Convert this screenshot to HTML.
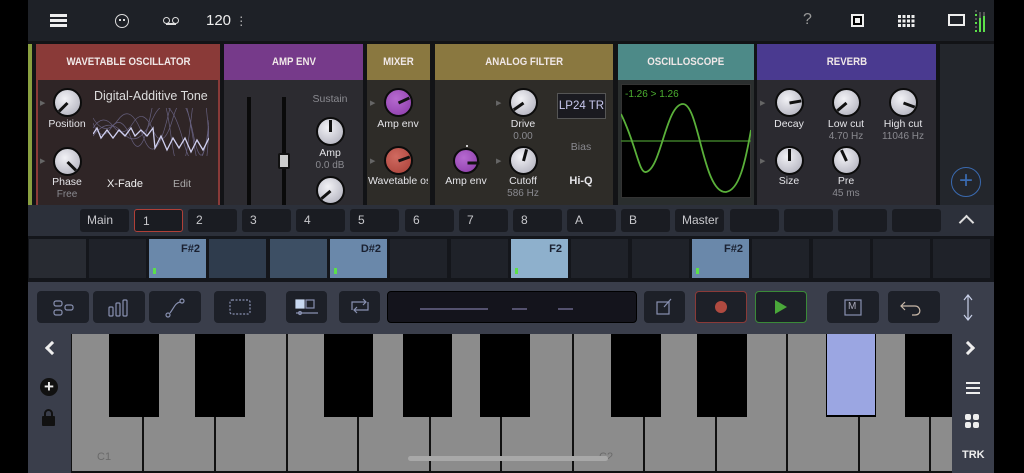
<!DOCTYPE html>
<html><head><meta charset="utf-8"><style>
*{margin:0;padding:0;box-sizing:border-box}
body{width:1024px;height:473px;background:#000;position:relative;overflow:hidden;font-family:"Liberation Sans",sans-serif;color:#ddd}
.a{position:absolute}
.k{position:absolute;width:29px;height:29px;border-radius:50%;border:2px solid #0c0c0c;background:radial-gradient(circle at 40% 35%,#f2f2f6,#a9a9b6)}
.k::after{content:"";position:absolute;left:11px;top:1px;width:3px;height:12px;background:#111;transform-origin:50% 100%;transform:rotate(var(--a))}
.kp{background:radial-gradient(circle at 40% 35%,#b66ad0,#8a3aa8)}
.kr{background:radial-gradient(circle at 40% 35%,#d06a60,#a84038)}
.lb{position:absolute;font-size:10.5px;color:#e4e4e8;text-align:center;width:80px;margin-left:-40px}
.sv{position:absolute;font-size:10px;color:#8a8a90;text-align:center;width:80px;margin-left:-40px}
.hd{position:absolute;top:44px;height:36px;font-size:11px;color:#f0e8e8;text-align:center;line-height:36px;font-weight:bold}
.hd span{display:inline-block;transform:scaleX(0.88)}
.tab{position:absolute;top:209px;width:49px;height:23px;background:#1a1c22;border-radius:3px;font-size:12px;color:#c8c8cc;padding-left:8px;line-height:23px}
.pc{position:absolute;top:239px;width:57px;height:39px;background:#1f2229;font-size:11px;color:#1a2030;text-align:right;padding-right:6px;line-height:20px;font-weight:bold}
.pc i{position:absolute;left:4px;bottom:4px;width:3px;height:6px;background:#5ce04a}
.tb{position:absolute;top:291px;height:32px;background:#1d2028;border-radius:4px}
.wk{position:absolute;top:334px;height:137px;background:#8c8c8c}
.bk{position:absolute;top:334px;height:83px;background:#000}
</style></head><body>
<!-- top bar -->
<div class="a" style="left:28px;top:0;width:966px;height:41px;background:#1e2127"></div>
<div class="a" style="left:50px;top:14px;width:17px;height:3px;background:#eee;box-shadow:0 5px 0 #eee,0 10px 0 #eee"></div>
<div class="a" style="left:115px;top:14px;width:14px;height:14px;border:1.5px solid #ddd;border-radius:50%"></div>
<div class="a" style="left:119px;top:19px;width:2px;height:2px;background:#ddd;box-shadow:4px 0 0 #ddd"></div>
<div class="a" style="left:163px;top:17px;width:7px;height:7px;border:1.5px solid #ddd;border-radius:50%"></div>
<div class="a" style="left:172px;top:17px;width:7px;height:7px;border:1.5px solid #ddd;border-radius:50%"></div>
<div class="a" style="left:166px;top:23px;width:10px;height:1.5px;background:#ddd"></div>
<div class="a" style="left:206px;top:12px;font-size:15px;color:#eee">120 <span style="font-size:12px;color:#bbb">⋮</span></div>
<div class="a" style="left:803px;top:11px;font-size:16px;color:#999">?</div>
<div class="a" style="left:851px;top:14px;width:13px;height:13px;border:2px solid #eee;background:#000"><div class="a" style="left:2px;top:2px;width:5px;height:5px;background:#eee"></div></div>
<div class="a" style="left:898px;top:14px;width:17px;height:13px;background:repeating-linear-gradient(90deg,#eee 0 3px,transparent 3px 4.5px);-webkit-mask:repeating-linear-gradient(0deg,#000 0 3px,transparent 3px 4.5px)"></div>
<div class="a" style="left:948px;top:14px;width:17px;height:12px;border:2px solid #eee"></div>
<div class="a" style="left:975px;top:10px;width:2px;height:22px;background:repeating-linear-gradient(0deg,#5ce04a 0 2px,transparent 2px 4px,#555 4px 6px,transparent 6px 8px)"></div>
<div class="a" style="left:979px;top:12px;width:2px;height:20px;background:linear-gradient(#555 0 30%,#5ce04a 30%)"></div>
<div class="a" style="left:983px;top:12px;width:2px;height:20px;background:linear-gradient(#555 0 20%,#5ce04a 20%)"></div>

<!-- module area bg -->
<div class="a" style="left:28px;top:41px;width:966px;height:165px;background:#121316"></div>
<div class="a" style="left:28px;top:44px;width:4px;height:162px;background:#8aa040"></div>
<!-- wavetable -->
<div class="a" style="left:36px;top:44px;width:184px;height:162px;background:#2f2526;border:2px solid #8a3a38;border-bottom:none"></div>
<div class="hd" style="left:36px;width:184px;background:#8a3a38"><span>WAVETABLE OSCILLATOR</span></div>
<div class="a" style="left:40px;top:99px;font-size:7px;color:#666">▶</div>
<div class="a" style="left:40px;top:157px;font-size:7px;color:#666">▶</div>
<div class="k" style="left:53px;top:88px;--a:-135deg"></div>
<div class="k" style="left:53px;top:147px;--a:135deg"></div>
<div class="lb" style="left:67px;top:118px">Position</div>
<div class="lb" style="left:67px;top:176px">Phase</div>
<div class="sv" style="left:67px;top:189px">Free</div>
<div class="a" style="left:94px;top:89px;font-size:12.5px;color:#ddd;white-space:nowrap;width:114px;overflow:hidden">Digital-Additive Tones</div>
<svg class="a" style="left:93px;top:108px" width="116" height="48" viewBox="0 0 116 48">
<g fill="none" stroke="#8a86b8" stroke-width="0.7" opacity="0.6">
<path d="M0 20 Q10 5 20 18 T40 15 T60 22 T80 10 T100 25 T116 12"/>
<path d="M0 10 Q12 30 25 12 T50 28 T75 8 T100 30 T116 18"/>
<path d="M0 28 Q15 8 30 25 T60 10 T90 32 T116 20"/>
<path d="M0 15 Q8 35 18 20 T38 30 T58 5 T78 28 T98 12 T116 30"/>
</g>
<path d="M0 26 L4 20 L8 30 L14 22 L20 30 L26 22 L32 28 L38 20 L42 28 L48 22 L54 28 L60 20 L62 40 L68 28 L74 42 L80 30 L86 40 L92 30 L98 44 L104 32 L110 42 L116 30" fill="none" stroke="#d0d0f0" stroke-width="1.3"/>
</svg>
<div class="lb" style="left:125px;top:178px;font-size:11px;color:#f0f0f0">X-Fade</div>
<div class="lb" style="left:182px;top:178px;color:#aaa">Edit</div>

<!-- amp env -->
<div class="a" style="left:224px;top:44px;width:139px;height:162px;background:#2c2b30"></div>
<div class="hd" style="left:224px;width:139px;background:#763a8a"><span>AMP ENV</span></div>
<div class="a" style="left:247px;top:97px;width:4px;height:109px;background:#0a0a0a"></div>
<div class="a" style="left:282px;top:97px;width:4px;height:109px;background:#0a0a0a"></div>
<div class="a" style="left:278px;top:153px;width:12px;height:16px;background:#ccc;border:2px solid #111;border-radius:2px"></div>
<div class="sv" style="left:330px;top:93px;font-size:10.5px">Sustain</div>
<div class="k" style="left:316px;top:117px;--a:0deg"></div>
<div class="lb" style="left:330px;top:147px">Amp</div>
<div class="sv" style="left:330px;top:160px">0.0 dB</div>
<div class="k" style="left:316px;top:176px;--a:-130deg"></div>

<!-- mixer -->
<div class="a" style="left:367px;top:44px;width:63px;height:162px;background:#2e2c28"></div>
<div class="hd" style="left:367px;width:63px;background:#8a7840"><span>MIXER</span></div>
<div class="a" style="left:370px;top:99px;font-size:7px;color:#666">▶</div>
<div class="a" style="left:370px;top:157px;font-size:7px;color:#666">▶</div>
<div class="k kp" style="left:384px;top:88px;--a:65deg"></div>
<div class="lb" style="left:398px;top:118px">Amp env</div>
<div class="k kr" style="left:384px;top:146px;--a:70deg"></div>
<div class="lb" style="left:398px;top:175px;white-space:nowrap;overflow:hidden;width:60px;margin-left:-30px">Wavetable os</div>

<!-- filter -->
<div class="a" style="left:435px;top:44px;width:178px;height:162px;background:#2e2c28"></div>
<div class="hd" style="left:435px;width:178px;background:#8a7840"><span>ANALOG FILTER</span></div>
<div class="a" style="left:496px;top:99px;font-size:7px;color:#666">▶</div>
<div class="a" style="left:496px;top:157px;font-size:7px;color:#666">▶</div>
<div class="a" style="left:466px;top:145px;width:2px;height:2px;background:#ccc"></div>
<div class="k kp" style="left:453px;top:148px;width:26px;height:26px;--a:90deg"></div>
<div class="lb" style="left:466px;top:175px">Amp env</div>
<div class="k" style="left:509px;top:88px;--a:-125deg"></div>
<div class="lb" style="left:523px;top:118px">Drive</div>
<div class="sv" style="left:523px;top:131px">0.00</div>
<div class="k" style="left:509px;top:146px;--a:15deg"></div>
<div class="lb" style="left:523px;top:175px">Cutoff</div>
<div class="sv" style="left:523px;top:188px">586 Hz</div>
<div class="a" style="left:557px;top:93px;width:49px;height:26px;background:#1a1a20;border:1px solid #555;font-size:11.5px;color:#c8c8ee;text-align:center;line-height:24px">LP24 TR</div>
<div class="sv" style="left:581px;top:141px;font-size:10.5px">Bias</div>
<div class="lb" style="left:581px;top:175px;font-size:11px;font-weight:bold">Hi-Q</div>

<!-- oscilloscope -->
<div class="a" style="left:618px;top:44px;width:136px;height:162px;background:#2a2e2e"></div>
<div class="hd" style="left:618px;width:136px;background:#4d8a88"><span>OSCILLOSCOPE</span></div>
<div class="a" style="left:621px;top:84px;width:130px;height:114px;background:#000;border:1px solid #333"></div>
<div class="a" style="left:625px;top:89px;font-size:10px;color:#4caf30">-1.26 &gt; 1.26</div>
<svg class="a" style="left:621px;top:84px" width="130" height="114"><line x1="0" y1="57" x2="130" y2="57" stroke="#3c7a28" stroke-width="1.5"/><path d="M0 30 C15 60 18 90 25 88 C40 85 45 20 62 20 C78 20 82 110 105 108 C118 106 124 80 130 46" fill="none" stroke="#5ab03a" stroke-width="1.8"/></svg>

<!-- reverb -->
<div class="a" style="left:757px;top:44px;width:179px;height:162px;background:#2b2a30"></div>
<div class="hd" style="left:757px;width:179px;background:#4a3a90"><span>REVERB</span></div>
<div class="a" style="left:760px;top:99px;font-size:7px;color:#666">▶</div>
<div class="a" style="left:760px;top:157px;font-size:7px;color:#666">▶</div>
<div class="k" style="left:775px;top:88px;--a:80deg"></div>
<div class="k" style="left:832px;top:88px;--a:-130deg"></div>
<div class="k" style="left:889px;top:88px;--a:110deg"></div>
<div class="lb" style="left:789px;top:118px">Decay</div>
<div class="lb" style="left:846px;top:118px">Low cut</div>
<div class="lb" style="left:903px;top:118px">High cut</div>
<div class="sv" style="left:846px;top:131px">4.70 Hz</div>
<div class="sv" style="left:903px;top:131px">11046 Hz</div>
<div class="k" style="left:775px;top:146px;--a:0deg"></div>
<div class="k" style="left:832px;top:146px;--a:-25deg"></div>
<div class="lb" style="left:789px;top:175px">Size</div>
<div class="lb" style="left:846px;top:175px">Pre</div>
<div class="sv" style="left:846px;top:188px">45 ms</div>
<div class="a" style="left:940px;top:44px;width:54px;height:162px;background:#23262c"></div>
<div class="a" style="left:951px;top:167px;width:30px;height:30px;border:1.5px solid #3a6ab0;border-radius:50%;color:#3a6ab0;font-size:24px;line-height:25px;text-align:center">+</div>

<!-- tabs -->
<div class="a" style="left:28px;top:205px;width:966px;height:31px;background:#2c303a"></div>
<div class="tab" style="left:80px;padding-left:7px">Main</div>
<div class="tab" style="left:134px;border:1px solid #b04038">1</div>
<div class="tab" style="left:188px">2</div>
<div class="tab" style="left:242px">3</div>
<div class="tab" style="left:296px">4</div>
<div class="tab" style="left:350px">5</div>
<div class="tab" style="left:405px">6</div>
<div class="tab" style="left:459px">7</div>
<div class="tab" style="left:513px">8</div>
<div class="tab" style="left:567px">A</div>
<div class="tab" style="left:621px">B</div>
<div class="tab" style="left:675px;padding-left:7px">Master</div>
<div class="tab" style="left:730px"></div>
<div class="tab" style="left:784px"></div>
<div class="tab" style="left:838px"></div>
<div class="tab" style="left:892px"></div>
<div class="a" style="left:961px;top:217px;width:11px;height:11px;border-left:2px solid #ddd;border-top:2px solid #ddd;transform:rotate(45deg)"></div>

<!-- pattern row -->
<div class="a" style="left:28px;top:236px;width:966px;height:46px;background:#14161b"></div>
<div class="pc" style="left:29px;background:#282b32"></div>
<div class="pc" style="left:89px"></div>
<div class="pc" style="left:149px;background:#6a88aa">F#2<i></i></div>
<div class="pc" style="left:209px;background:#2f3c4d"></div>
<div class="pc" style="left:270px;background:#3d4f64"></div>
<div class="pc" style="left:330px;background:#6a88aa">D#2<i></i></div>
<div class="pc" style="left:390px"></div>
<div class="pc" style="left:451px"></div>
<div class="pc" style="left:511px;background:#8eb0cc">F2<i></i></div>
<div class="pc" style="left:571px"></div>
<div class="pc" style="left:632px"></div>
<div class="pc" style="left:692px;background:#6a88aa">F#2<i></i></div>
<div class="pc" style="left:752px"></div>
<div class="pc" style="left:813px"></div>
<div class="pc" style="left:873px"></div>
<div class="pc" style="left:933px"></div>

<!-- toolbar -->
<div class="a" style="left:28px;top:282px;width:966px;height:191px;background:#3a3e4b"></div>
<div class="tb" style="left:37px;width:52px"></div>
<div class="tb" style="left:93px;width:52px"></div>
<div class="tb" style="left:149px;width:52px"></div>
<div class="tb" style="left:214px;width:52px"></div>
<div class="tb" style="left:286px;width:41px"></div>
<div class="tb" style="left:339px;width:41px"></div>
<div class="tb" style="left:387px;width:250px;background:#14141c;border:1px solid #000"></div>
<div class="tb" style="left:644px;width:41px"></div>
<div class="tb" style="left:695px;width:52px;border:1px solid #8a3a38"></div>
<div class="tb" style="left:755px;width:52px;border:1px solid #3a8a38"></div>
<div class="tb" style="left:827px;width:52px"></div>
<div class="tb" style="left:888px;width:52px"></div>
<svg class="a" style="left:0;top:282px" width="1024" height="50" fill="none" stroke="#8890b0" stroke-width="1.2">
<g transform="translate(0,8)">
<rect x="54" y="11" width="8" height="5" rx="2"/><rect x="54" y="20" width="8" height="5" rx="2"/><rect x="65" y="15" width="8" height="5" rx="2"/>
<rect x="109" y="17" width="4" height="9" rx="1"/><rect x="116" y="13" width="4" height="13" rx="1"/><rect x="123" y="10" width="4" height="16" rx="1"/>
<circle cx="168" cy="25" r="2"/><circle cx="182" cy="11" r="2"/><path d="M170 23 C174 18 175 13 180 12"/>
<rect x="230" y="10" width="20" height="14" rx="2" stroke-dasharray="2 1.5"/>
<rect x="296" y="10" width="8" height="8" fill="#c8d8f0" stroke="#c8d8f0"/><rect x="306" y="10" width="8" height="8"/><path d="M296 23 H318"/><circle cx="300" cy="23" r="1.5"/>
<path d="M352 20 V12 H366 M363 9 L366 12 L363 15 M368 12 V20 H354 M357 23 L354 20 L357 17"/>
<rect x="657" y="12" width="12" height="12"/><path d="M664 17 L671 9" />
<rect x="845" y="10" width="16" height="15"/>
<path d="M905 12 L901 16 L905 20 M901 16 H915 C921 16 922 25 915 25 H912" stroke="#c8b8a8"/>
<path d="M968 6 V29 M964 10 L968 5 L972 10 M964 25 L968 30 L972 25" stroke="#c8d0e8"/>
</g>
<path d="M420 27 H466 M466 27 H488 M512 27 H527 M558 27 H573" stroke="#7a76a0"/>
</svg>
<div class="a" style="left:848px;top:301px;font-size:10px;color:#aab">M</div>
<div class="a" style="left:715px;top:301px;width:12px;height:12px;border-radius:50%;background:#b04a40"></div>
<div class="a" style="left:775px;top:300px;width:0;height:0;border-left:12px solid #4aa83a;border-top:7px solid transparent;border-bottom:7px solid transparent"></div>

<!-- keyboard -->
<div class="a" style="left:71px;top:334px;width:881px;height:139px;background:#111"></div>
<div class="wk" style="left:72px;width:70px"></div>
<div class="wk" style="left:144px;width:70px"></div>
<div class="wk" style="left:216px;width:70px"></div>
<div class="wk" style="left:288px;width:69px"></div>
<div class="wk" style="left:359px;width:70px"></div>
<div class="wk" style="left:431px;width:69px"></div>
<div class="wk" style="left:502px;width:70px"></div>
<div class="wk" style="left:574px;width:69px"></div>
<div class="wk" style="left:645px;width:70px"></div>
<div class="wk" style="left:717px;width:69px"></div>
<div class="wk" style="left:788px;width:70px"></div>
<div class="wk" style="left:860px;width:69px"></div>
<div class="wk" style="left:931px;width:21px"></div>
<div class="bk" style="left:109px;width:50px"></div>
<div class="bk" style="left:195px;width:50px"></div>
<div class="bk" style="left:324px;width:49px"></div>
<div class="bk" style="left:403px;width:49px"></div>
<div class="bk" style="left:480px;width:50px"></div>
<div class="bk" style="left:611px;width:50px"></div>
<div class="bk" style="left:697px;width:50px"></div>
<div class="bk" style="left:826px;width:50px;background:#000"></div>
<div class="a" style="left:827px;top:334px;width:48px;height:81px;background:#9ba6e2"></div>
<div class="bk" style="left:905px;width:47px"></div>
<div class="a" style="left:97px;top:451px;font-size:11px;color:#6a6a6a">C1</div>
<div class="a" style="left:599px;top:451px;font-size:11px;color:#6a6a6a;height:8px;overflow:hidden">C2</div>
<div class="a" style="left:408px;top:456px;width:200px;height:5px;border-radius:3px;background:#a8a8a8"></div>
<!-- side panels -->
<div class="a" style="left:44px;top:343px;width:10px;height:10px;border-left:3px solid #eee;border-bottom:3px solid #eee;transform:rotate(45deg);margin-left:3px"></div>
<div class="a" style="left:40px;top:378px;width:18px;height:18px;border-radius:50%;background:#111;color:#eee;font-size:17px;font-weight:bold;line-height:17px;text-align:center">+</div>
<div class="a" style="left:42px;top:416px;width:13px;height:10px;background:#111;border-radius:1px"></div>
<div class="a" style="left:44px;top:409px;width:9px;height:10px;border:2px solid #111;border-radius:5px 5px 0 0"></div>
<div class="a" style="left:963px;top:343px;width:10px;height:10px;border-right:3px solid #eee;border-top:3px solid #eee;transform:rotate(45deg)"></div>
<div class="a" style="left:966px;top:382px;width:14px;height:2px;background:#eee;box-shadow:0 5px 0 #eee,0 10px 0 #eee"></div>
<div class="a" style="left:965px;top:414px;width:6px;height:6px;border-radius:2px;background:#eee;box-shadow:8px 0 0 #eee,0 8px 0 #eee,8px 8px 0 #eee"></div>
<div class="a" style="left:962px;top:449px;font-size:11px;font-weight:bold;color:#eee">TRK</div>
</body></html>
